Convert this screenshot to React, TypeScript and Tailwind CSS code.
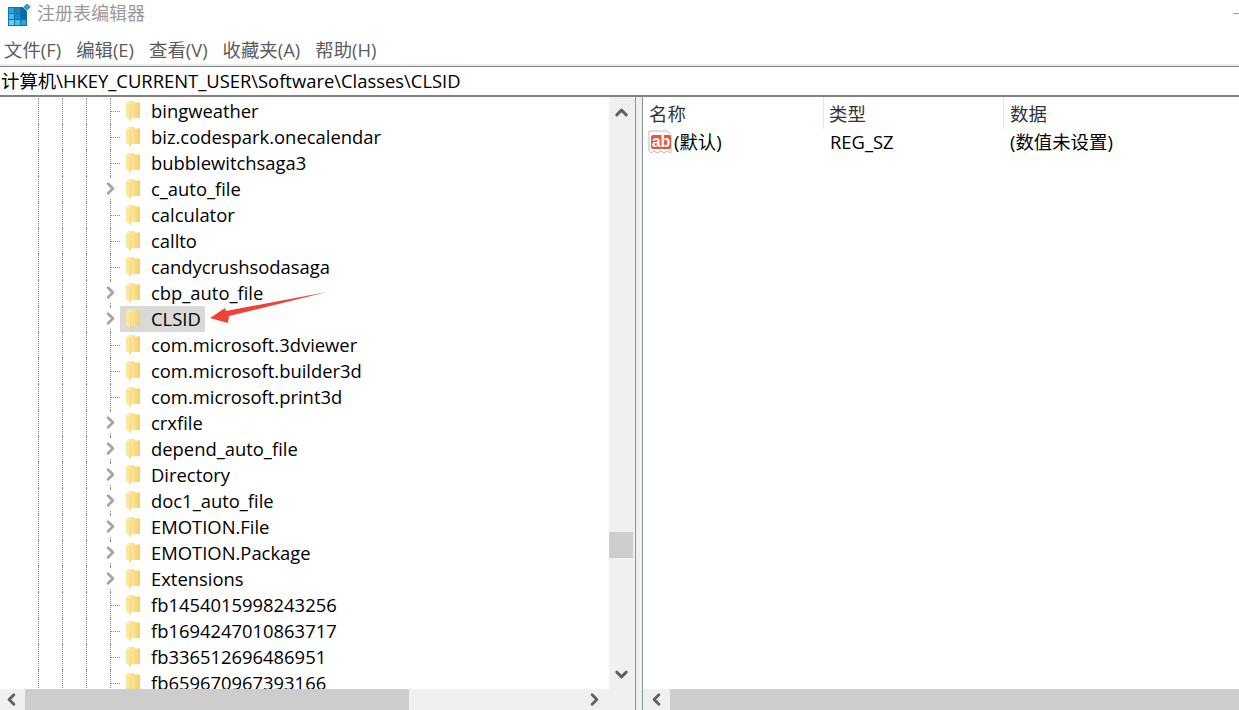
import React from 'react';
import { ChevronRight, ChevronLeft, ChevronUp, ChevronDown } from 'lucide-react';

const FONT = '"Open Sans", "Noto Sans CJK SC", sans-serif';

const rows: { name: string; arrow?: boolean; selected?: boolean }[] = [
    { name: 'bingweather' },
    { name: 'biz.codespark.onecalendar' },
    { name: 'bubblewitchsaga3' },
    { name: 'c_auto_file', arrow: true },
    { name: 'calculator' },
    { name: 'callto' },
    { name: 'candycrushsodasaga' },
    { name: 'cbp_auto_file', arrow: true },
    { name: 'CLSID', arrow: true, selected: true },
    { name: 'com.microsoft.3dviewer' },
    { name: 'com.microsoft.builder3d' },
    { name: 'com.microsoft.print3d' },
    { name: 'crxfile', arrow: true },
    { name: 'depend_auto_file', arrow: true },
    { name: 'Directory', arrow: true },
    { name: 'doc1_auto_file', arrow: true },
    { name: 'EMOTION.File', arrow: true },
    { name: 'EMOTION.Package', arrow: true },
    { name: 'Extensions', arrow: true },
    { name: 'fb1454015998243256' },
    { name: 'fb1694247010863717' },
    { name: 'fb336512696486951' },
    { name: 'fb659670967393166' },
];

const menus = ['文件(F)', '编辑(E)', '查看(V)', '收藏夹(A)', '帮助(H)'];

const FolderIcon = () => (
    <svg width="15" height="20" viewBox="0 0 15 20" className="shrink-0">
        <defs>
            <linearGradient id="folderBack" x1="0" y1="0" x2="1" y2="0">
                <stop offset="0" stopColor="#fdeeb0" />
                <stop offset="1" stopColor="#f5cf68" />
            </linearGradient>
        </defs>
        <path d="M2 0h6l1 1.5h5V17H2z" fill="url(#folderBack)" />
        <path d="M0 1l5 3v16l-5-4z" fill="#fbe6a0" />
        <path d="M4.5 3.7l.5.3v16l-.5-.4z" fill="#eec25c" />
    </svg>
);

const RegIcon = () => (
    <svg width="25" height="25" viewBox="0 0 25 25" className="shrink-0">
        <path d="M1 1h18l4 4v18l-4-2-3 2-3-2-4 2-3-2-3 2-2-2z" fill="#fff" stroke="#bdbdbd" />
        <rect x="3" y="5" width="20" height="14" rx="2" fill="#e2583e" />
        <text x="13" y="17" textAnchor="middle" fontSize="16" fontWeight="700" fill="#fff" fontFamily='"Liberation Sans", sans-serif'>ab</text>
    </svg>
);

const TitleIcon = () => (
    <svg width="26" height="26" viewBox="0 0 26 26" className="shrink-0">
        <rect x="1" y="3" width="19" height="19" fill="#0f76ad" />
        <rect x="2" y="4" width="5" height="5" fill="#2ba3dd" />
        <rect x="8" y="4" width="5" height="5" fill="#1b86bf" />
        <rect x="14" y="4" width="5" height="5" fill="#0b6a9f" />
        <rect x="2" y="10" width="5" height="5" fill="#45bdf0" />
        <rect x="8" y="10" width="5" height="5" fill="#1b86bf" />
        <rect x="14" y="10" width="5" height="5" fill="#0b6a9f" />
        <rect x="2" y="16" width="5" height="5" fill="#63cdf7" />
        <rect x="8" y="16" width="5" height="5" fill="#45bdf0" />
        <rect x="14" y="16" width="5" height="5" fill="#2ba3dd" />
        <path d="M20 -2l4 4-4 4-4-4z" transform="translate(0 1)" fill="#3b9ac6" stroke="#fff" strokeWidth="0.5" />
    </svg>
);

const TreeRow = ({ name, arrow, selected }: { name: string; arrow?: boolean; selected?: boolean }) => (
    <div className="h-[26px] flex items-center shrink-0">
        <div className="w-[38px] h-full shrink-0" />
        <div className="w-6 h-full shrink-0 border-l border-dotted border-[#8a8a8a]" />
        <div className="w-6 h-full shrink-0 border-l border-dotted border-[#8a8a8a]" />
        <div className="w-6 h-full shrink-0 border-l border-dotted border-[#8a8a8a]" />
        <div className="w-[10px] h-full shrink-0 border-l border-dotted border-[#8a8a8a] relative">
            {arrow ? (
                <ChevronRight size={19} strokeWidth={3.6} className="absolute left-[-10px] top-[3px] text-[#a6a6a6] bg-white" />
            ) : (
                <div className="absolute left-0 top-[13px] w-[9px] border-t border-dotted border-[#8a8a8a]" />
            )}
        </div>
        <div className={`h-full flex items-center w-[85px] grow-0 ${selected ? 'bg-[#d9d9d9]' : ''}`}>
            <div className="flex items-center pl-[6px] whitespace-nowrap">
                <FolderIcon />
                <span className="ml-[10px] text-[18.4px] text-black">{name}</span>
            </div>
        </div>
    </div>
);

export default function App() {
    return (
        <div className="w-[1239px] h-[710px] bg-white flex flex-col overflow-hidden relative" style={{ fontFamily: FONT }}>
            {/* Title bar */}
            <div className="h-[33px] flex items-center pl-[7px] shrink-0 relative">
                <TitleIcon />
                <span className="ml-[4px] mb-[6px] text-[18px] text-[#999999]">注册表编辑器</span>
                <div className="absolute right-0 top-[13px] w-[6px] h-px bg-[#999999]" />
            </div>

            {/* Menu */}
            <div className="h-[31px] flex items-center pl-[4px] pt-[2px] gap-[15px] text-[18.4px] text-[#5c5c5c] shrink-0">
                {menus.map((m) => (
                    <span key={m}>{m}</span>
                ))}
            </div>

            {/* Address */}
            <div className="h-[2px] bg-[#eeeeee] shrink-0" />
            <div className="h-[31px] border-t border-[#808080] border-b-2 flex items-center pl-[1px] text-[18.4px] text-black shrink-0">
                计算机\HKEY_CURRENT_USER\Software\Classes\CLSID
            </div>

            <div className="flex flex-1 min-h-0">
                {/* Tree */}
                <div className="w-[635px] flex flex-col shrink-0 bg-[#f0f0f0]">
                    <div className="flex flex-1 min-h-0">
                        <div className="w-[609px] bg-white overflow-hidden flex flex-col pt-px">
                            {rows.map((r) => (
                                <TreeRow key={r.name} {...r} />
                            ))}
                        </div>
                        <div className="w-6 flex flex-col items-center">
                            <ChevronUp size={19} strokeWidth={3.6} className="mt-[6px] text-[#606060]" />
                            <div className="h-[410px] shrink-0" />
                            <div className="self-stretch h-[26px] bg-[#cdcdcd] shrink-0" />
                            <div className="flex-1" />
                            <ChevronDown size={19} strokeWidth={3.6} className="mb-[5px] text-[#606060]" />
                        </div>
                    </div>
                    <div className="h-[21px] flex items-center shrink-0">
                        <div className="w-[22px] flex justify-center"><ChevronLeft size={19} strokeWidth={3.6} className="text-[#606060]" /></div>
                        <div className="w-[384px] h-full ml-[3px] bg-[#cdcdcd]" />
                        <div className="flex-1" />
                        <div className="w-6 flex justify-center"><ChevronRight size={19} strokeWidth={3.6} className="text-[#606060]" /></div>
                        <div className="w-[29px]" />
                    </div>
                </div>

                {/* Splitter */}
                <div className="w-2 shrink-0 bg-[#f0f0f0] border-x border-[#8c939c]" />

                {/* Values */}
                <div className="flex-1 flex flex-col min-w-0">
                    <div className="flex-1 min-h-0">
                        <div className="h-[32px] flex items-center text-[18.4px] text-[#333333]">
                            <div className="w-[181px] h-full flex items-center pl-[6px] pt-[2px] border-r border-[#e5e5e5]">名称</div>
                            <div className="w-[180px] h-full flex items-center pl-[5px] pt-[2px] border-r border-[#e5e5e5]">类型</div>
                            <div className="pl-[6px] pt-[2px]">数据</div>
                        </div>
                        <div className="h-[26px] flex items-center text-[18.4px] text-black">
                            <div className="w-[181px] flex items-center pl-[5px]">
                                <RegIcon />
                                <span className="ml-[1px]">(默认)</span>
                            </div>
                            <div className="w-[180px] pl-[6px]">REG_SZ</div>
                            <div className="pl-[6px]">(数值未设置)</div>
                        </div>
                    </div>
                    <div className="h-[21px] bg-[#f0f0f0] flex items-center shrink-0">
                        <div className="w-[27px] flex justify-center"><ChevronLeft size={19} strokeWidth={3.6} className="text-[#606060]" /></div>
                        <div className="flex-1 h-full bg-[#cdcdcd]" />
                    </div>
                </div>
            </div>

            {/* Annotation arrow */}
            <svg className="absolute left-[205px] top-[285px]" width="130" height="45" viewBox="205 285 130 45">
                <path d="M327 292L229 316L228 323L210 318L225 308L226 311z" fill="#ef4136" />
            </svg>
        </div>
    );
}
